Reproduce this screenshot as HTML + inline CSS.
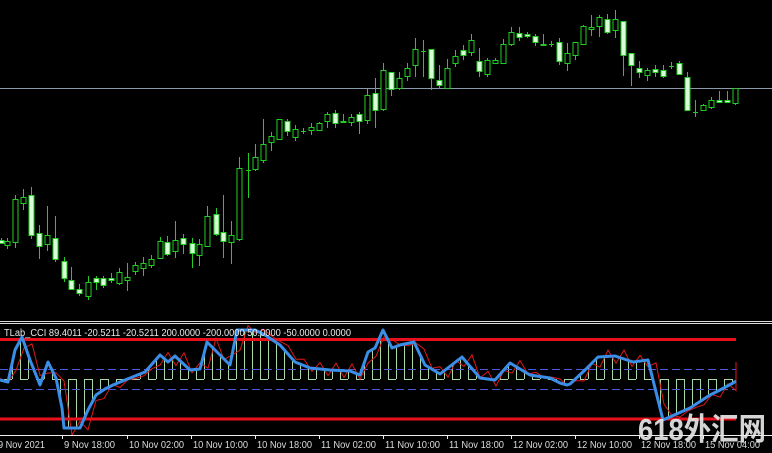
<!DOCTYPE html>
<html><head><meta charset="utf-8">
<style>
html,body{margin:0;padding:0;background:#000;width:772px;height:453px;overflow:hidden}
svg{display:block}
text{font-family:"Liberation Sans",sans-serif}
</style></head><body>
<svg id="s" width="772" height="453" xmlns="http://www.w3.org/2000/svg">
<rect width="772" height="453" fill="#000"/>
<line x1="0" y1="88.5" x2="772" y2="88.5" stroke="#8a9aaa" stroke-width="1"/>
<line x1="0" y1="321.5" x2="772" y2="321.5" stroke="#ddd" stroke-width="1"/>
<line x1="0" y1="323.5" x2="772" y2="323.5" stroke="#ddd" stroke-width="1"/>
<g id="c"></g>
<g id="ind"></g>
<text x="4" y="336" font-size="10" fill="#e8e8e8" textLength="347" lengthAdjust="spacingAndGlyphs">TLab_CCI 89.4011 -20.5211 -20.5211 200.0000 -200.0000 50.0000 -50.0000 0.0000</text>
<line x1="0" y1="435.5" x2="772" y2="435.5" stroke="#eee" stroke-width="1"/>
<g id="ax" font-size="10.5" fill="#ddd"></g>
<text x="638" y="440" font-size="31" font-weight="bold" fill="#e6e6e6" fill-opacity="0.92" style="font-family:'Liberation Sans','Noto Sans CJK SC',sans-serif" textLength="128" lengthAdjust="spacingAndGlyphs">618外汇网</text>
</svg>
<script>
var NS="http://www.w3.org/2000/svg";
function el(p,t,a){var e=document.createElementNS(NS,t);for(var k in a)e.setAttribute(k,a[k]);p.appendChild(e);return e;}
var C=[
[1,240,243,238,244,1],[7,241,245,238,249,0],[15,199,242,195,248,0],[23,197,203,189,210,0],[31,195,235,187,239,1],[39,233,246,225,259,1],[47,235,244,206,251,0],[55,238,259,216,262,1],[64,261,278,257,282,1],[71,280,289,267,290,1],[79,289,293,284,296,1],[88,282,296,276,300,0],[96,278,282,276,290,1],[103,278,285,276,288,1],[111,278,280,273,283,1],[119,272,283,268,285,0],[127,277,280,263,291,0],[135,265,271,262,275,0],[143,263,268,257,276,0],[151,259,265,255,268,0],[160,241,258,237,259,0],[167,242,254,236,256,1],[175,240,251,221,258,0],
[183,238,244,234,254,1],[192,243,253,238,268,1],[199,244,255,239,266,0],[207,216,246,206,247,0],[216,214,234,208,236,1],[223,232,241,195,258,1],[231,235,242,221,264,0],[239,168,239,157,241,0],[248,170,170,153,198,0],[255,157,169,144,171,0],[263,144,160,119,163,0],[271,136,142,132,151,0],[279,119,139,119,140,0],[287,121,131,119,136,1],[295,129,137,125,141,0],[303,131,131,128,134,0],[311,127,130,123,135,0],[319,123,130,122,131,0],[327,114,121,112,128,0],[335,113,123,110,128,1],[343,121,122,114,123,1],[351,117,122,114,126,0],[359,114,121,112,134,1],[367,95,120,89,124,0],[375,93,110,78,128,1],
[383,70,109,63,111,0],[391,72,89,72,96,1],[399,78,88,72,90,0],[407,68,76,63,81,0],[415,49,65,38,77,0],[423,51,51,40,77,0],[431,49,78,49,90,1],[439,80,85,65,89,1],[447,68,88,59,88,0],[455,56,63,50,67,0],[463,50,55,45,60,1],[471,40,52,34,56,0],[479,61,71,48,77,1],[487,60,74,58,77,0],[495,60,63,58,64,0],[503,44,63,39,64,0],[511,32,44,27,46,0],[519,33,37,27,41,1],[527,34,36,32,38,1],[535,36,42,34,46,1],[543,44,45,34,46,1],[551,44,44,41,47,0],[559,42,61,38,65,1],[567,53,63,43,71,0],[575,42,55,42,60,0],[583,26,44,25,44,0],[591,27,29,15,36,0],[599,17,26,15,37,0],[607,19,32,14,34,1],[615,19,30,10,38,0],[623,21,55,21,76,1],[631,53,65,53,86,1],[639,68,72,61,78,1],[647,70,75,68,81,0],[655,69,72,65,77,1],[663,70,76,65,78,1],[671,66,66,62,69,0],[679,63,74,61,75,1],[687,77,110,72,110,1],[695,112,112,100,117,0],[703,105,110,104,111,0],[711,100,107,97,109,0],[719,100,102,91,103,1],[727,100,102,91,103,1],[735,88,103,88,105,0]];
var g=document.getElementById("c");
C.forEach(function(c){
 el(g,"line",{x1:c[0]+.5,x2:c[0]+.5,y1:c[3],y2:c[4],stroke:"#22cc22","stroke-width":1});
 var h=Math.max(c[2]-c[1],1);
 if(c[2]-c[1]<1){el(g,"line",{x1:c[0]-2,x2:c[0]+3,y1:c[1]+.5,y2:c[1]+.5,stroke:"#22cc22"});}
 else el(g,"rect",{x:c[0]-2,y:c[1]+.5,width:5,height:h,fill:c[5]?"#d8ffd8":"#000",stroke:"#22cc22","stroke-width":1});
});
var ind=document.getElementById("ind");
var B=[[0,380],[8,382],[15,350],[22,337],[30,360],[40,385],[48,362],[56,378],[62,408],[64,428],[80,428],[88,410],[96,395],[105,389],[113,385],[125,380],[135,376],[145,372],[160,355],[168,362],[175,356],[190,370],[200,369],[207,342],[215,350],[230,365],[237,330],[255,330],[265,335],[280,345],[295,362],[310,368],[330,370],[350,371],[360,375],[368,352],[375,348],[383,330],[392,348],[400,345],[414,342],[425,365],[440,374],[462,357],[480,378],[495,380],[510,363],[530,375],[550,378],[560,383],[567,385],[570,384],[585,370],[598,357],[615,356],[633,362],[648,360],[663,420],[690,408],[710,395],[720,390],[733,383],[736,381]];
function yAt(x){for(var i=1;i<B.length;i++){if(x<=B[i][0]){var a=B[i-1],b=B[i];return a[1]+(b[1]-a[1])*(x-a[0])/(b[0]-a[0]);}}return B[B.length-1][1];}
for(var x=4;x<736;x+=8){var y=yAt(x);el(ind,"line",{x1:x+.5,x2:x+.5,y1:379,y2:y,stroke:"#a8d8a8","stroke-width":1});}
for(var x=4;x<728;x+=16){el(ind,"line",{x1:x,x2:x+8,y1:379.5,y2:379.5,stroke:"#a8d8a8","stroke-width":1});}
el(ind,"line",{x1:0,x2:736,y1:369.5,y2:369.5,stroke:"#4a5ad8","stroke-dasharray":"8,4","stroke-width":1});
el(ind,"line",{x1:0,x2:736,y1:389.5,y2:389.5,stroke:"#4a5ad8","stroke-dasharray":"8,4","stroke-width":1});
el(ind,"line",{x1:0,x2:736,y1:339.5,y2:339.5,stroke:"#e8101a","stroke-width":3});
el(ind,"line",{x1:0,x2:736,y1:419,y2:419,stroke:"#e8101a","stroke-width":3});
var R=[];for(var x=0;x<=736;x+=8){var y=yAt(x-6)+Math.sin(x*0.37)*7;R.push(x+","+y.toFixed(1));}
R.push("736,362");
el(ind,"polyline",{points:R.join(" "),fill:"none",stroke:"#e01818","stroke-width":1});
el(ind,"polyline",{points:B.map(function(p){return p.join(",")}).join(" "),fill:"none",stroke:"#3a8ee8","stroke-width":3,"stroke-linejoin":"round"});
var ax=document.getElementById("ax");
var L=[[0,"9 Nov 2021"],[62,"9 Nov 18:00"],[127,"10 Nov 02:00"],[191,"10 Nov 10:00"],[255,"10 Nov 18:00"],[319,"11 Nov 02:00"],[383,"11 Nov 10:00"],[447,"11 Nov 18:00"],[511,"12 Nov 02:00"],[575,"12 Nov 10:00"],[639,"12 Nov 18:00"],[703,"15 Nov 04:00"]];
L.forEach(function(l){var w=l[1].length>11?55:(l[0]?51:47);var t=el(ax,"text",{x:l[0]+(l[0]?2:-2),y:448,textLength:w,lengthAdjust:"spacingAndGlyphs"});t.textContent=l[1];if(l[0])el(ax,"line",{x1:l[0]+.5,x2:l[0]+.5,y1:435,y2:439,stroke:"#eee"});});
</script>
</body></html>
